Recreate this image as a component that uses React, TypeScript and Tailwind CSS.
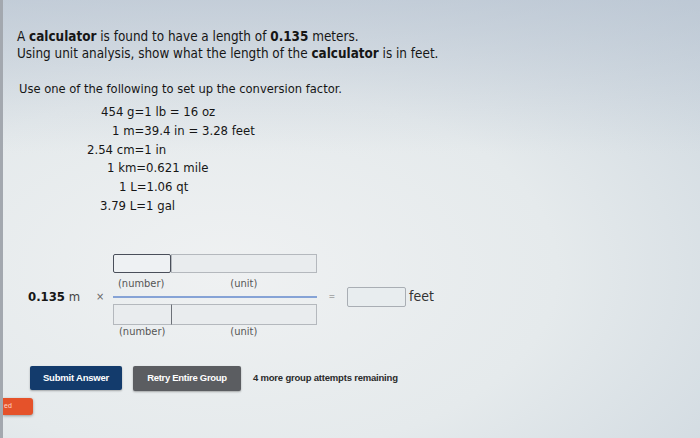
import React from "react";

const eqFont = { fontFamily: '"DejaVu Sans Condensed", "DejaVu Sans", sans-serif' };

export default function App() {
  return (
    <div
      className="w-[700px] h-[438px] overflow-hidden border-l-[3px] border-[#a3a8af] bg-[linear-gradient(to_bottom,rgba(178,190,206,0.55)_0%,rgba(178,190,206,0)_35%),radial-gradient(ellipse_95%_85%_at_32%_62%,#eff1f2_0%,#e5eaec_50%,#ccd6de_100%)] text-[#161616] relative"
      style={eqFont}
    >
      <div className="pl-[14px] pt-[28px]">
        <p className="text-[13.4px] leading-[17px]">
          A <b>calculator</b> is found to have a length of <b>0.135</b> meters.
        </p>
        <p className="text-[13.4px] leading-[17px]">
          Using unit analysis, show what the length of the <b>calculator</b> is in feet.
        </p>
        <p className="text-[12.8px] leading-[17px] mt-[18px] ml-[2px]">
          Use one of the following to set up the conversion factor.
        </p>
        <div className="text-[13px] leading-[18.8px] mt-[6px]">
          <div className="ml-[84px]">454 g=1 lb = 16 oz</div>
          <div className="ml-[95px]">1 m=39.4 in = 3.28 feet</div>
          <div className="ml-[70px]">2.54 cm=1 in</div>
          <div className="ml-[90px]">1 km=0.621 mile</div>
          <div className="ml-[102px]">1 L=1.06 qt</div>
          <div className="ml-[83px]">3.79 L=1 gal</div>
        </div>

        <div className="flex items-center mt-[38px] ml-[11px]">
          <div className="text-[13px] w-[68px]">
            <b>0.135</b> <span className="text-[#444]">m</span>
          </div>
          <div className="text-[11px] text-[#666] w-[17px]">×</div>
          <div className="flex flex-col w-[204px]">
            <div className="flex h-[19px]">
              <div className="w-[58px] h-full border-[1.5px] border-[#4a4f5a] rounded-[2px] bg-[#eef1f3]" />
              <div className="flex-1 h-full border border-[#b4b8bd] bg-[#e9ecee]" />
            </div>
            <div className="flex h-[23px] items-center text-[11px] text-[#555]">
              <span className="ml-[5px]">(number)</span>
              <span className="ml-[66px]">(unit)</span>
            </div>
            <div className="h-[2px] bg-[#86a3d6]" />
            <div className="flex h-[21px] mt-[6px]">
              <div className="w-[59px] h-full border border-[#b4b8bd] border-r-[#6d7178] border-r-[1.5px] bg-[#e9ecee]" />
              <div className="flex-1 h-full border border-l-0 border-[#b4b8bd] bg-[#e9ecee]" />
            </div>
            <div className="flex h-[15px] items-center text-[11px] text-[#555]">
              <span className="ml-[6px]">(number)</span>
              <span className="ml-[65px]">(unit)</span>
            </div>
          </div>
          <div className="w-[30px] text-center text-[9px] text-[#777]">=</div>
          <div className="w-[59px] h-[20px] border border-[#a9aeb4] rounded-[2px] bg-[#e8edef]" />
          <div className="ml-[3px] text-[14px] text-[#333]">feet</div>
        </div>

        <div className="flex items-center mt-[26px] ml-[13px]" style={{ fontFamily: '"Liberation Sans", Arial, sans-serif' }}>
          <div className="w-[92px] h-[24px] bg-[#133b6c] rounded-[2px] flex items-center justify-center text-white text-[9.5px] font-bold tracking-[-0.2px] shadow-[0_1px_2px_rgba(0,0,0,0.3)]">
            Submit Answer
          </div>
          <div className="ml-[11px] w-[108px] h-[25px] bg-[#5b5d61] rounded-[2px] flex items-center justify-center text-white text-[9.5px] font-bold tracking-[-0.3px] shadow-[0_1px_2px_rgba(0,0,0,0.3)]">
            Retry Entire Group
          </div>
          <div className="ml-[12px] text-[9.5px] text-[#2a2a2a] font-semibold tracking-[-0.2px]">
            4 more group attempts remaining
          </div>
        </div>
      </div>
      <div className="mt-[7px] w-[30px] h-[17px] bg-[#e5522a] rounded-r-[3px] flex items-center pl-[1px] text-[7px] text-[#ffd9c8] shadow-[0_1px_3px_rgba(0,0,0,0.35)]" style={{ fontFamily: '"Liberation Sans", Arial, sans-serif' }}>
        ed
      </div>
    </div>
  );
}
